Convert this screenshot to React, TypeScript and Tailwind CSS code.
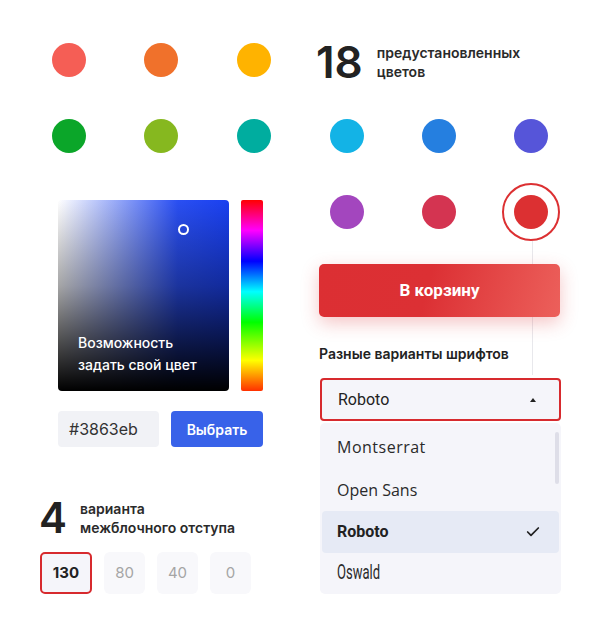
import React from 'react';
import { Check } from 'lucide-react';

const TOP_ROW = ['#f55e55', '#f0712b', '#ffb300'];
const MID_ROW = ['#0ba629', '#86b81f', '#00ad9f', '#13b3e6', '#257fe0', '#5655d9'];
const COL_W = ['w-[92px]', 'w-[92px]', 'w-[94px]', 'w-[92px]', 'w-[92px]', 'w-[92px]'];

function Dot({ color }: { color: string }) {
    return <div className="h-[34px] w-[34px] rounded-full" style={{ backgroundColor: color }} />;
}

function Stat({ value, lines, big, gap }: { value: string; lines: string[]; big: string; gap: string }) {
    return (
        <div className={`flex items-center ${gap}`}>
            <span className={`${big} leading-none font-semibold text-[#222]`}>{value}</span>
            <div className="text-[14px] leading-[19px] font-semibold text-[#2a2a2a]">
                {lines.map(l => (
                    <div key={l}>{l}</div>
                ))}
            </div>
        </div>
    );
}

export default function App() {
    return (
        <div className="w-[600px] h-[640px] bg-white pl-[23px] pt-[38px] font-['Inter',sans-serif] text-[#222]">
            {/* Row 1 */}
            <div className="flex h-[44px] items-center">
                {TOP_ROW.map((c, i) => (
                    <div key={c} className={`${COL_W[i]} flex justify-center`}>
                        <Dot color={c} />
                    </div>
                ))}
                <div className="ml-[15px] mt-1">
                    <Stat value="18" lines={['предустановленных', 'цветов']} big="text-[44px]" gap="gap-[14px]" />
                </div>
            </div>

            {/* Row 2 */}
            <div className="flex h-[34px] mt-[37px]">
                {MID_ROW.map((c, i) => (
                    <div key={c} className={`${COL_W[i]} flex justify-center`}>
                        <Dot color={c} />
                    </div>
                ))}
            </div>

            <div className="flex">
                {/* Left column */}
                <div className="w-[278px] pl-[16px]">
                    <div className="ml-[19px] mt-[47px] flex gap-[12px]">
                        <div className="relative w-[171px] h-[191px] rounded-[4px] overflow-hidden bg-[linear-gradient(to_bottom,rgba(0,0,0,0)_0%,rgba(0,0,0,0.35)_45%,#000_100%),linear-gradient(to_right,#ffffff,#2a4ff2_70%,#1a40f0)] flex flex-col justify-end px-[20px] pb-[15px]">
                            <div className="absolute left-[120px] top-[24px] h-[11px] w-[11px] rounded-full border-2 border-white" />
                            <div className="text-white text-[14px] leading-[22px] font-medium">
                                Возможность
                                <br />
                                задать свой цвет
                            </div>
                        </div>
                        <div className="w-[22px] h-[191px] rounded-[2px] bg-[linear-gradient(to_bottom,#ff0000_0%,#ff00ff_16%,#0000ff_32%,#00ffff_48%,#00ff00_64%,#ffff00_84%,#ff3000_100%)]" />
                    </div>

                    <div className="ml-[19px] mt-[20px] flex gap-[12px]">
                        <div className="w-[101px] h-[36px] rounded-[4px] bg-[#f1f2f6] flex items-center pl-[11px] text-[16px] text-[#333]">
                            #3863eb
                        </div>
                        <button
                            type="button"
                            className="w-[92px] h-[36px] rounded-[4px] bg-[#3862e9] text-white text-[14px] font-semibold"
                        >
                            Выбрать
                        </button>
                    </div>

                    <div className="mt-[50px]">
                        <Stat value="4" lines={['варианта', 'межблочного отступа']} big="text-[42px]" gap="gap-[13px]" />
                    </div>

                    <div className="mt-[13px] ml-[1px] flex gap-[12px]">
                        <div className="w-[52px] h-[42px] rounded-[5px] border-2 border-[#d72a2e] bg-[#f5f5fa] flex items-center justify-center text-[15px] font-bold text-[#222]">
                            130
                        </div>
                        {['80', '40', '0'].map(v => (
                            <div
                                key={v}
                                className="w-[41px] h-[42px] rounded-[6px] bg-[#f8f8fb] flex items-center justify-center text-[15px] text-[#a5a5a5]"
                            >
                                {v}
                            </div>
                        ))}
                    </div>
                </div>

                {/* Right column */}
                <div className="relative w-[279px] pt-[42px]">
                    <div className="absolute left-[231px] top-[88px] h-[134px] w-px bg-[#e8e8ec]" />

                    <div className="flex h-[34px]">
                        <div className="w-[92px] flex justify-center">
                            <Dot color="#a346be" />
                        </div>
                        <div className="w-[92px] flex justify-center">
                            <Dot color="#d43451" />
                        </div>
                        <div className="w-[92px] flex justify-center">
                            <div className="relative">
                                <Dot color="#dc3032" />
                                <div className="absolute -inset-[12px] rounded-full border-2 border-[#dc3032]" />
                            </div>
                        </div>
                    </div>

                    <button
                        type="button"
                        className="relative z-10 ml-[18px] mt-[35px] w-[241px] h-[53px] rounded-[5px] bg-[linear-gradient(105deg,#dc2f33_0%,#dc3034_45%,#ec605b_100%)] shadow-[0_6px_18px_rgba(220,47,52,0.28)] text-white text-[17px] font-bold font-['Roboto',sans-serif]"
                    >
                        В корзину
                    </button>

                    <div className="ml-[18px] mt-[27px] text-[14px] leading-[19px] font-semibold text-[#222]">
                        Разные варианты шрифтов
                    </div>

                    <div className="ml-[19px] mt-[15px] w-[241px] h-[43px] rounded-[4px] border-2 border-[#d72a2e] bg-[#f5f5fa] flex items-center justify-between pl-[16px] pr-[23px] font-['Roboto',sans-serif] text-[16px] text-[#222]">
                        <span>Roboto</span>
                        <span className="w-0 h-0 border-x-[3.5px] border-x-transparent border-b-[4px] border-b-[#222]" />
                    </div>

                    <div className="relative ml-[19px] mt-[2px] w-[241px] h-[171px] rounded-[5px] bg-[#f5f5fa] overflow-hidden pt-[2px]">
                        <div className="absolute right-[2px] top-[9px] w-[4px] h-[52px] rounded-full bg-[#dedee8]" />
                        <div className="h-[43px] flex items-center pl-[17px] font-['Open_Sans',sans-serif] text-[16px] tracking-[0.5px] text-[#2a2a2a]">
                            Montserrat
                        </div>
                        <div className="h-[43px] flex items-center pl-[17px] font-['Open_Sans',sans-serif] text-[16px] text-[#2a2a2a]">
                            Open Sans
                        </div>
                        <div className="mx-[2px] h-[42px] rounded-[4px] bg-[#e6eaf5] flex items-center justify-between pl-[15px] pr-[18px] font-['Roboto',sans-serif] text-[16px] font-bold text-[#222]">
                            <span>Roboto</span>
                            <Check className="w-[16px] h-[16px]" strokeWidth={2.6} />
                        </div>
                        <div className="h-[40px] flex items-center pl-[17px] font-['Roboto',sans-serif] text-[21px] text-[#2a2a2a]">
                            <span className="inline-block origin-left scale-x-[0.62]">Oswald</span>
                        </div>
                    </div>
                </div>
            </div>
        </div>
    );
}
